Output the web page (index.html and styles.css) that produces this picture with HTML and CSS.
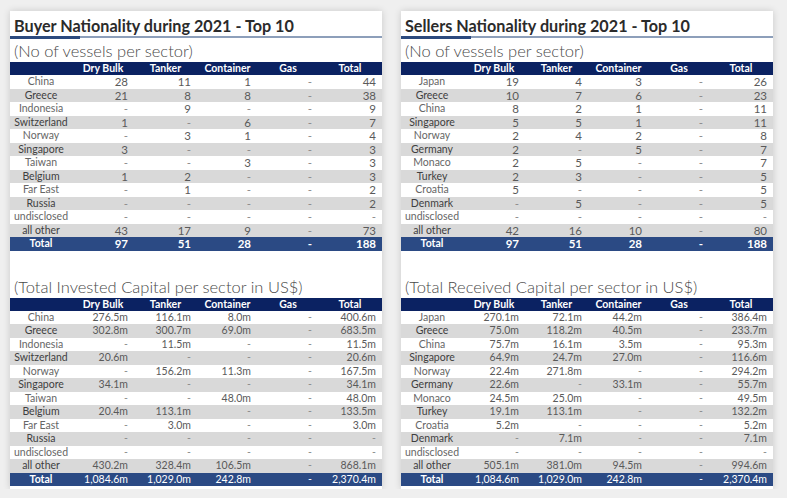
FILE: index.html
```html
<!DOCTYPE html>
<html>
<head>
<meta charset="utf-8">
<link rel="stylesheet" href="styles.css">
</head>
<body>
<div class="page">
  <section class="card">
    <h1 class="title">Buyer Nationality during 2021 - Top 10</h1>
    <h2 class="sub">(No of vessels per sector)</h2>
    <table class="tbl vessels">
      <colgroup><col class="c0"><col class="c1"><col class="c2"><col class="c3"><col class="c4"><col class="c5"></colgroup>
      <tr class="head"><th></th><th>Dry Bulk</th><th>Tanker</th><th>Container</th><th>Gas</th><th>Total</th></tr>
      <tr><td>China</td><td>28</td><td>11</td><td>1</td><td class="d">-</td><td>44</td></tr>
      <tr class="alt"><td>Greece</td><td>21</td><td>8</td><td>8</td><td class="d">-</td><td>38</td></tr>
      <tr><td>Indonesia</td><td class="d">-</td><td>9</td><td class="d">-</td><td class="d">-</td><td>9</td></tr>
      <tr class="alt"><td>Switzerland</td><td>1</td><td class="d">-</td><td>6</td><td class="d">-</td><td>7</td></tr>
      <tr><td>Norway</td><td class="d">-</td><td>3</td><td>1</td><td class="d">-</td><td>4</td></tr>
      <tr class="alt"><td>Singapore</td><td>3</td><td class="d">-</td><td class="d">-</td><td class="d">-</td><td>3</td></tr>
      <tr><td>Taiwan</td><td class="d">-</td><td class="d">-</td><td>3</td><td class="d">-</td><td>3</td></tr>
      <tr class="alt"><td>Belgium</td><td>1</td><td>2</td><td class="d">-</td><td class="d">-</td><td>3</td></tr>
      <tr><td>Far East</td><td class="d">-</td><td>1</td><td class="d">-</td><td class="d">-</td><td>2</td></tr>
      <tr class="alt"><td>Russia</td><td class="d">-</td><td class="d">-</td><td class="d">-</td><td class="d">-</td><td>2</td></tr>
      <tr><td>undisclosed</td><td class="d">-</td><td class="d">-</td><td class="d">-</td><td class="d">-</td><td class="d">-</td></tr>
      <tr class="alt"><td>all other</td><td>43</td><td>17</td><td>9</td><td class="d">-</td><td>73</td></tr>
      <tr class="total"><td>Total</td><td>97</td><td>51</td><td>28</td><td>-</td><td>188</td></tr>
    </table>
    <h2 class="sub second">(Total Invested Capital per sector in US$)</h2>
    <table class="tbl capital">
      <colgroup><col class="c0"><col class="c1"><col class="c2"><col class="c3"><col class="c4"><col class="c5"></colgroup>
      <tr class="head"><th></th><th>Dry Bulk</th><th>Tanker</th><th>Container</th><th>Gas</th><th>Total</th></tr>
      <tr><td>China</td><td>276.5m</td><td>116.1m</td><td>8.0m</td><td class="d">-</td><td>400.6m</td></tr>
      <tr class="alt"><td>Greece</td><td>302.8m</td><td>300.7m</td><td>69.0m</td><td class="d">-</td><td>683.5m</td></tr>
      <tr><td>Indonesia</td><td class="d">-</td><td>11.5m</td><td class="d">-</td><td class="d">-</td><td>11.5m</td></tr>
      <tr class="alt"><td>Switzerland</td><td>20.6m</td><td class="d">-</td><td class="d">-</td><td class="d">-</td><td>20.6m</td></tr>
      <tr><td>Norway</td><td class="d">-</td><td>156.2m</td><td>11.3m</td><td class="d">-</td><td>167.5m</td></tr>
      <tr class="alt"><td>Singapore</td><td>34.1m</td><td class="d">-</td><td class="d">-</td><td class="d">-</td><td>34.1m</td></tr>
      <tr><td>Taiwan</td><td class="d">-</td><td class="d">-</td><td>48.0m</td><td class="d">-</td><td>48.0m</td></tr>
      <tr class="alt"><td>Belgium</td><td>20.4m</td><td>113.1m</td><td class="d">-</td><td class="d">-</td><td>133.5m</td></tr>
      <tr><td>Far East</td><td class="d">-</td><td>3.0m</td><td class="d">-</td><td class="d">-</td><td>3.0m</td></tr>
      <tr class="alt"><td>Russia</td><td class="d">-</td><td class="d">-</td><td class="d">-</td><td class="d">-</td><td class="d">-</td></tr>
      <tr><td>undisclosed</td><td class="d">-</td><td class="d">-</td><td class="d">-</td><td class="d">-</td><td class="d">-</td></tr>
      <tr class="alt"><td>all other</td><td>430.2m</td><td>328.4m</td><td>106.5m</td><td class="d">-</td><td>868.1m</td></tr>
      <tr class="total"><td>Total</td><td>1,084.6m</td><td>1,029.0m</td><td>242.8m</td><td>-</td><td>2,370.4m</td></tr>
    </table>
  </section>

  <section class="card">
    <h1 class="title">Sellers Nationality during 2021 - Top 10</h1>
    <h2 class="sub">(No of vessels per sector)</h2>
    <table class="tbl vessels">
      <colgroup><col class="c0"><col class="c1"><col class="c2"><col class="c3"><col class="c4"><col class="c5"></colgroup>
      <tr class="head"><th></th><th>Dry Bulk</th><th>Tanker</th><th>Container</th><th>Gas</th><th>Total</th></tr>
      <tr><td>Japan</td><td>19</td><td>4</td><td>3</td><td class="d">-</td><td>26</td></tr>
      <tr class="alt"><td>Greece</td><td>10</td><td>7</td><td>6</td><td class="d">-</td><td>23</td></tr>
      <tr><td>China</td><td>8</td><td>2</td><td>1</td><td class="d">-</td><td>11</td></tr>
      <tr class="alt"><td>Singapore</td><td>5</td><td>5</td><td>1</td><td class="d">-</td><td>11</td></tr>
      <tr><td>Norway</td><td>2</td><td>4</td><td>2</td><td class="d">-</td><td>8</td></tr>
      <tr class="alt"><td>Germany</td><td>2</td><td class="d">-</td><td>5</td><td class="d">-</td><td>7</td></tr>
      <tr><td>Monaco</td><td>2</td><td>5</td><td class="d">-</td><td class="d">-</td><td>7</td></tr>
      <tr class="alt"><td>Turkey</td><td>2</td><td>3</td><td class="d">-</td><td class="d">-</td><td>5</td></tr>
      <tr><td>Croatia</td><td>5</td><td class="d">-</td><td class="d">-</td><td class="d">-</td><td>5</td></tr>
      <tr class="alt"><td>Denmark</td><td class="d">-</td><td>5</td><td class="d">-</td><td class="d">-</td><td>5</td></tr>
      <tr><td>undisclosed</td><td class="d">-</td><td class="d">-</td><td class="d">-</td><td class="d">-</td><td class="d">-</td></tr>
      <tr class="alt"><td>all other</td><td>42</td><td>16</td><td>10</td><td class="d">-</td><td>80</td></tr>
      <tr class="total"><td>Total</td><td>97</td><td>51</td><td>28</td><td>-</td><td>188</td></tr>
    </table>
    <h2 class="sub second">(Total Received Capital per sector in US$)</h2>
    <table class="tbl capital">
      <colgroup><col class="c0"><col class="c1"><col class="c2"><col class="c3"><col class="c4"><col class="c5"></colgroup>
      <tr class="head"><th></th><th>Dry Bulk</th><th>Tanker</th><th>Container</th><th>Gas</th><th>Total</th></tr>
      <tr><td>Japan</td><td>270.1m</td><td>72.1m</td><td>44.2m</td><td class="d">-</td><td>386.4m</td></tr>
      <tr class="alt"><td>Greece</td><td>75.0m</td><td>118.2m</td><td>40.5m</td><td class="d">-</td><td>233.7m</td></tr>
      <tr><td>China</td><td>75.7m</td><td>16.1m</td><td>3.5m</td><td class="d">-</td><td>95.3m</td></tr>
      <tr class="alt"><td>Singapore</td><td>64.9m</td><td>24.7m</td><td>27.0m</td><td class="d">-</td><td>116.6m</td></tr>
      <tr><td>Norway</td><td>22.4m</td><td>271.8m</td><td class="d">-</td><td class="d">-</td><td>294.2m</td></tr>
      <tr class="alt"><td>Germany</td><td>22.6m</td><td class="d">-</td><td>33.1m</td><td class="d">-</td><td>55.7m</td></tr>
      <tr><td>Monaco</td><td>24.5m</td><td>25.0m</td><td class="d">-</td><td class="d">-</td><td>49.5m</td></tr>
      <tr class="alt"><td>Turkey</td><td>19.1m</td><td>113.1m</td><td class="d">-</td><td class="d">-</td><td>132.2m</td></tr>
      <tr><td>Croatia</td><td>5.2m</td><td class="d">-</td><td class="d">-</td><td class="d">-</td><td>5.2m</td></tr>
      <tr class="alt"><td>Denmark</td><td class="d">-</td><td>7.1m</td><td class="d">-</td><td class="d">-</td><td>7.1m</td></tr>
      <tr><td>undisclosed</td><td class="d">-</td><td class="d">-</td><td class="d">-</td><td class="d">-</td><td class="d">-</td></tr>
      <tr class="alt"><td>all other</td><td>505.1m</td><td>381.0m</td><td>94.5m</td><td class="d">-</td><td>994.6m</td></tr>
      <tr class="total"><td>Total</td><td>1,084.6m</td><td>1,029.0m</td><td>242.8m</td><td>-</td><td>2,370.4m</td></tr>
    </table>
  </section>
</div>
</body>
</html>
```
FILE: styles.css
```css
html, body {
  margin: 0;
  padding: 0;
  background: #efefef;
}
body {
  font-family: Lato, "Liberation Sans", sans-serif;
  color: #555;
}
.page {
  display: flex;
  gap: 19px;
  padding: 11px 0 0 10px;
}
.card {
  width: 372px;
  height: 478px;
  box-sizing: border-box;
  background: #fff;
  box-shadow: 0 0 7px rgba(0, 0, 0, 0.16);
  padding-top: 6px;
}
.title {
  position: relative;
  margin: 0;
  padding: 0 0 1px 4px;
  font-size: 16.2px;
  line-height: 18px;
  font-weight: 700;
  color: #2b2b2b;
  border-bottom: 2px solid #8d9fba;
}
.title::after {
  content: "";
  position: absolute;
  left: 0;
  bottom: -3px;
  width: 70px;
  height: 3px;
  background: #2c4a7e;
}
.sub {
  margin: 0;
  padding: 2px 0 0 4px;
  height: 24px;
  box-sizing: border-box;
  font-size: 16.5px;
  line-height: 22px;
  font-weight: 300;
  color: #4a4a4a;
}
.sub.second {
  margin-top: 23px;
}
.tbl {
  width: 100%;
  table-layout: fixed;
  border-collapse: collapse;
  border-spacing: 0;
}
.c0 { width: 62px; }
.c1 { width: 62px; }
.c2 { width: 63px; }
.c3 { width: 61px; }
.c4 { width: 60px; }
.c5 { width: 64px; }
.tbl th, .tbl td {
  padding: 0 6px 0 0;
  white-space: nowrap;
  overflow: hidden;
}
.tbl tr.head {
  height: 13px;
  background: #0b2262;
}
.tbl th {
  padding: 0;
  font-size: 10.5px;
  line-height: 13px;
  font-weight: 700;
  color: #fff;
  text-align: center;
}
.tbl tr {
  height: 13.5px;
}
.tbl td {
  line-height: 13px;
  text-align: right;
  color: #5a5a5a;
}
.tbl td:first-child {
  padding: 0;
  text-align: center;
  font-size: 10.5px;
  color: #666;
}
.tbl td:nth-child(4) {
  padding-right: 7px;
}
.tbl tr.alt {
  background: #d9d9d9;
}
.tbl tr.alt td:first-child {
  color: #3f3f3f;
}
.vessels td {
  font-size: 11.5px;
}
.capital td {
  font-size: 10.5px;
}
.tbl td.d {
  color: #8c8c8c;
}
.tbl tr.total {
  background: #2b4a84;
}
.tbl tr.total td {
  color: #fff;
  font-weight: 700;
}
.capital tr.total td {
  font-weight: 400;
}
.capital tr.total td:first-child {
  font-weight: 700;
}
.tbl tr.total td:first-child {
  color: #fff;
  font-size: 10.5px;
}
```
